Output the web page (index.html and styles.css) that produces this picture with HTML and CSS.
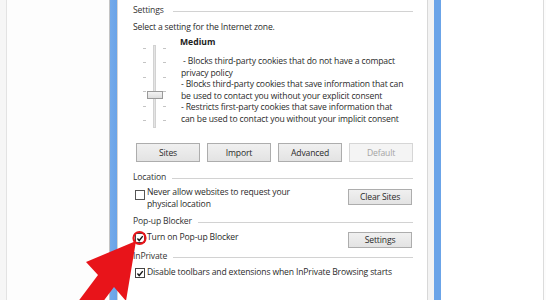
FILE: index.html
```html
<!DOCTYPE html>
<html>
<head>
<meta charset="utf-8">
<link rel="stylesheet" href="styles.css">
</head>
<body>
<div class="screen">
  <div class="side-left"><div class="side-inner"></div></div>
  <div class="frame-left"></div>
  <div class="dialog">
    <div class="group-title gt-settings"><span>Settings</span></div>
    <p class="lead">Select a setting for the Internet zone.</p>
    <div class="zone">
      <div class="slider">
        <div class="ticks">
          <i></i><i></i><i></i><i></i><i></i><i></i>
        </div>
        <div class="track"><div class="thumb"></div></div>
        <div class="ticks">
          <i></i><i></i><i></i><i></i><i></i><i></i>
        </div>
      </div>
      <div class="desc">
        <div class="level">Medium</div>
        <p class="bullets">&nbsp;- Blocks third-party cookies that do not have a compact<br>privacy policy<br>- Blocks third-party cookies that save information that can<br>be used to contact you without your explicit consent<br>- Restricts first-party cookies that save information that<br>can be used to contact you without your implicit consent</p>
      </div>
    </div>
    <div class="btn-row">
      <button class="btn">Sites</button>
      <button class="btn">Import</button>
      <button class="btn">Advanced</button>
      <button class="btn disabled">Default</button>
    </div>
    <div class="group-title gt-location"><span>Location</span></div>
    <div class="opt-row row-location">
      <label class="check">
        <span class="box"></span>
        <span class="label-text">Never allow websites to request your<br>physical location</span>
      </label>
      <button class="btn small">Clear Sites</button>
    </div>
    <div class="group-title gt-popup"><span>Pop-up Blocker</span></div>
    <div class="opt-row row-popup">
      <label class="check">
        <span class="box checked"><svg viewBox="0 0 9 9" width="9" height="9"><path d="M1.6 4.6 L3.6 6.8 L7.6 1.8" fill="none" stroke="#1a1a1a" stroke-width="1.6"/></svg></span>
        <span class="label-text">Turn on Pop-up Blocker</span>
      </label>
      <button class="btn small">Settings</button>
    </div>
    <div class="group-title gt-private"><span>InPrivate</span></div>
    <div class="opt-row row-private">
      <label class="check">
        <span class="box checked"><svg viewBox="0 0 9 9" width="9" height="9"><path d="M1.6 4.6 L3.6 6.8 L7.6 1.8" fill="none" stroke="#1a1a1a" stroke-width="1.6"/></svg></span>
        <span class="label-text">Disable toolbars and extensions when InPrivate Browsing starts</span>
      </label>
    </div>
  </div>
  <div class="frame-right-gap"></div>
  <div class="frame-right"></div>
  <div class="side-right"></div>
</div>
<svg class="annotation" width="546" height="300" viewBox="0 0 546 300">
  <polygon points="136,241 126,301 114,287 90,319 74,307 98,275 86,262" fill="#e8141a"/>
  <circle cx="139.5" cy="238" r="6" fill="none" stroke="#e8141a" stroke-width="2.2"/>
</svg>
</body>
</html>
```

FILE: styles.css
```css
* { box-sizing: border-box; }

body {
  margin: 0;
  width: 546px;
  height: 300px;
  overflow: hidden;
  position: relative;
  background: #fcfcfc;
  font-family: "Open Sans", "Noto Sans", sans-serif;
  font-size: 8.6px;
  letter-spacing: -0.15px;
  line-height: 11.5px;
  color: #2a2a2a;
}

.screen {
  display: flex;
  height: 300px;
}

.side-left {
  width: 110px;
  padding-left: 6px;
  background: #f6f6f6;
}
.side-inner {
  height: 100%;
  border-left: 1px solid #e3e3e3;
  background: #fdfdfd;
}

.frame-left {
  width: 9px;
  border-left: 1px solid #c4c4c4;
  border-right: 1px solid #d6d6d6;
  background: linear-gradient(to right, #74aaea 0, #6aa3e8 7px, #ffffff 7px);
}

.dialog {
  width: 310px;
  background: #ffffff;
  padding: 5px 14px 0 15px;
  border-right: 1px solid #d8d8d8;
}

.group-title {
  display: flex;
  align-items: center;
  height: 12px;
  gap: 6px;
  color: #333;
}
.group-title::after {
  content: "";
  flex: 1;
  height: 1px;
  background: #d2d2d2;
}
.gt-settings::after { margin-left: 3px; }

.lead {
  margin: 5px 0 0;
  height: 12px;
}

.zone {
  display: flex;
  margin-top: 3px;
  height: 100px;
}

.slider {
  width: 47px;
  display: flex;
  padding: 8px 0 0 10px;
  height: 92px;
}
.ticks {
  display: flex;
  flex-direction: column;
  gap: 13.4px;
  padding-top: 3px;
  width: 3px;
}
.ticks i {
  display: block;
  width: 3px;
  height: 1px;
  background: #c4c4c4;
}
.track {
  position: relative;
  width: 3px;
  height: 83px;
  margin: 0 7px;
  background: #e4e4e4;
  border: 1px solid #d2d2d2;
}
.thumb {
  position: absolute;
  left: -7px;
  top: 45px;
  width: 16px;
  height: 8px;
  border: 1px solid #9a9a9a;
  background: linear-gradient(#f4f4f4, #dedede);
}

.desc {
  flex: 1;
}
.level {
  font-weight: 700;
  height: 12px;
  color: #222;
  letter-spacing: 0;
}
.bullets {
  margin: 7px 0 0 1px;
  color: #2a2a2a;
  white-space: nowrap;
}

.btn-row {
  display: flex;
  gap: 7px;
  margin: 6px 0 0 3px;
}
.btn {
  font-family: inherit;
  font-size: 8.6px;
  letter-spacing: -0.15px;
  color: #2a2a2a;
  width: 64px;
  height: 19px;
  padding: 0;
  border: 1px solid #adadad;
  background: linear-gradient(#f0f0f0, #e3e3e3);
}
.btn.disabled {
  color: #a4a4a4;
  border-color: #d6d6d6;
  background: #f4f4f4;
}
.btn.small {
  height: 16px;
  margin-right: 1px;
}

.gt-location { margin-top: 10px; }

.opt-row {
  display: flex;
  justify-content: space-between;
  align-items: flex-start;
}
.row-location { margin-top: 3px; }
.row-location .btn { margin-top: 2px; }
.row-location .box { margin-top: 3px; }

.check {
  display: flex;
  align-items: flex-start;
  gap: 2px;
  padding-left: 2px;
}
.box {
  width: 10px;
  height: 10px;
  border: 1px solid #555;
  background: #fff;
  display: flex;
  align-items: center;
  justify-content: center;
}
.box.checked { border-color: #444; }

.gt-popup { margin-top: 6px; }
.row-popup { margin-top: 4px; }
.row-popup .box { margin-top: 1px; }

.gt-private { margin-top: 3px; }
.row-private { margin-top: 4px; }
.row-private .box { margin-top: 1px; }

.frame-right-gap {
  width: 6px;
  background: #f3f3f3;
}
.frame-right {
  width: 7px;
  background: #6ba4e8;
}
.side-right {
  width: 104px;
  background: #ffffff;
  border-right: 1px solid #dcdcdc;
  margin-right: 2px;
}

.annotation {
  position: absolute;
  left: 0;
  top: 0;
  pointer-events: none;
}
```
